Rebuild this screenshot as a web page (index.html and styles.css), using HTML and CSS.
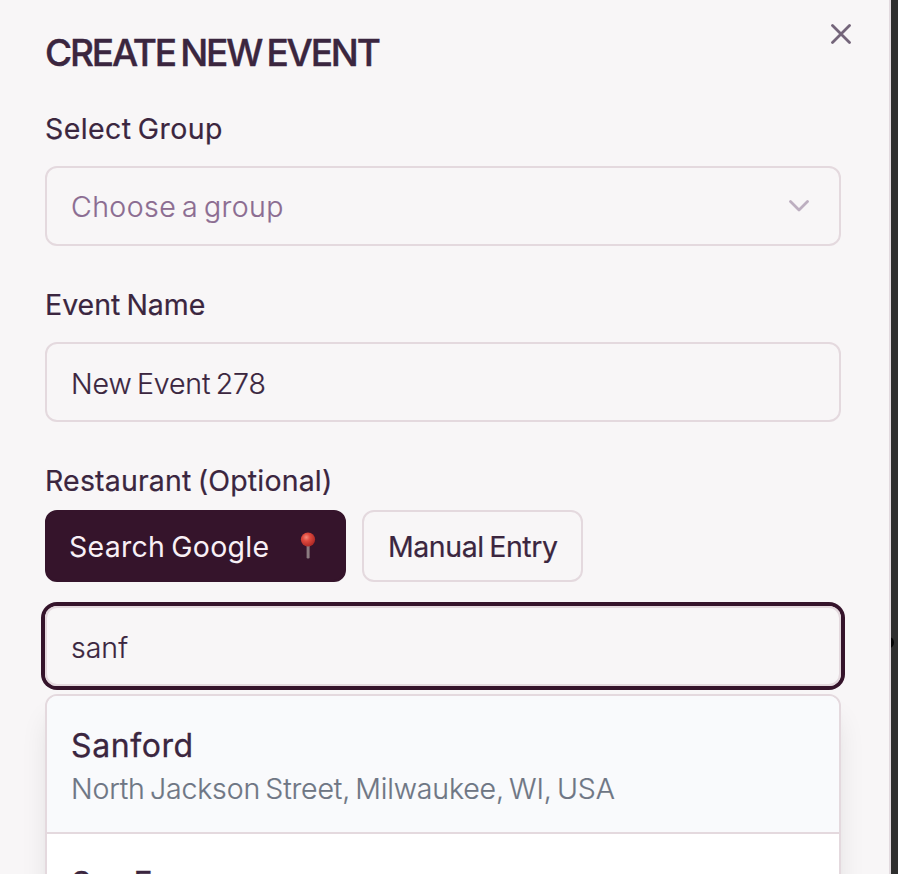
FILE: index.html
```html
<!DOCTYPE html>
<html lang="en">
<head>
<meta charset="utf-8">
<title>Create New Event</title>
<link rel="stylesheet" href="styles.css">
</head>
<body>
<main class="dialog">
  <h1 class="title"><span class="t-title">CREATE NEW EVENT</span></h1>
  <button class="close" aria-label="Close"><svg width="20" height="20" viewBox="0 0 20 20"><path d="M1.5 1.5 18.5 18.5M18.5 1.5 1.5 18.5"/></svg></button>

  <section class="group">
    <label class="label"><span class="t-select">Select Group</span></label>
    <div class="field select"><span class="placeholder t-choose">Choose a group</span>
      <svg class="chevron" width="20" height="12" viewBox="0 0 20 12"><path d="M1.5 1.5 10 10 18.500 1.500"/></svg>
    </div>
  </section>

  <section class="group">
    <label class="label"><span class="t-event">Event Name</span></label>
    <div class="field"><span class="t-new">New Event 278</span></div>
  </section>

  <section class="group restaurant">
    <label class="label"><span class="t-rest">Restaurant (Optional)</span></label>
    <div class="tabs">
      <button class="tab active"><span class="t-search">Search Google</span>
        <svg class="pin" width="16" height="28" viewBox="0 0 16 28">
          <defs><radialGradient id="ball" cx=".38" cy=".35" r=".65"><stop offset="0" stop-color="#f58a7c"/><stop offset=".4" stop-color="#df4a3e"/><stop offset="1" stop-color="#ad2926"/></radialGradient></defs>
          <rect x="6.600" y="13" width="3" height="13.500" rx="1.200" fill="#8b7b80"/>
          <circle cx="8" cy="7.500" r="7.100" fill="url(#ball)"/>
        </svg>
      </button>
      <button class="tab"><span class="t-manual">Manual Entry</span></button>
    </div>
    <div class="field focused"><span class="t-sanf">sanf</span></div>
    <div class="results">
      <div class="result highlighted">
        <div class="name"><span class="t-sanford">Sanford</span></div>
        <div class="address"><span class="t-north">North Jackson Street, Milwaukee, WI, USA</span></div>
      </div>
      <div class="result"><div class="name"><span class="t-next">San Fran</span></div></div>
    </div>
  </section>
</main>
<aside class="backdrop"><i class="dot"></i></aside>
</body>
</html>
```

FILE: styles.css
```css
* { box-sizing: border-box; }
body {
  margin: 0;
  height: 874px;
  display: flex;
  overflow: hidden;
  background: #2e2e2e;
  color: #3b263f;
  font-family: Inter, "Open Sans", sans-serif;
  font-size: 28.5px;
  line-height: 36px;
  white-space: nowrap;
}
button { font: inherit; color: inherit; background: none; border: 0; padding: 0; }
svg { display: block; fill: none; stroke-linecap: round; stroke-linejoin: round; }
.dialog {
  position: relative;
  width: 891px;
  height: 874px;
  overflow: hidden;
  padding: 29px 48px 0 45px;
  background: #f8f6f7;
  border-right: 2px solid #e2dadf;
}
.title { margin: 0; height: 82px; font-size: 37px; line-height: 48px; font-weight: 500; }
.close { position: absolute; left: 831px; top: 24px; }
.close svg { stroke: #74657a; stroke-width: 2.800; }
.group { height: 176px; }
.label { display: block; height: 55px; font-weight: 400; -webkit-text-stroke: .2px; }
.field {
  height: 80px;
  border: 2px solid #e4d9de;
  border-radius: 12px;
  padding: 3px 24px 0;
  display: flex;
  align-items: center;
  justify-content: space-between;
  font-weight: 300;
  -webkit-text-stroke: .2px;
}
.select { padding-top: 1px; }
.placeholder { color: #8b6c91; }
.chevron { margin-right: 6px; margin-top: -1px; }
.chevron path { stroke: #bdafc0; stroke-width: 2.800; }
.restaurant .label { height: 47px; }
.tabs { display: flex; gap: 16px; }
.tab { width: 221px; height: 72px; border: 2px solid #e4d9de; border-radius: 12px; padding: 2px 0 0 24px; display: flex; align-items: center; font-weight: 400; -webkit-text-stroke: .2px; }
.tab.active { width: 301px; background: #35142b; border-color: #35142b; color: #f8f0f6; justify-content: space-between; padding: 2px 28px 0 22px; -webkit-text-stroke: 0; }
.pin { margin-top: -2px; }
.focused { margin-top: 24px; box-shadow: 0 0 0 4px #35142b; }
.results { margin-top: 8px; height: 300px; border: 2px solid #e4d9de; border-radius: 12px; background: #fff; overflow: hidden; box-shadow: 0 20px 30px -6px rgb(0 0 0 / .12), 0 8px 12px -8px rgb(0 0 0 / .1); }
.result { height: 138px; padding: 29px 24px 0; border-bottom: 2px solid #e4d9de; }
.highlighted { background: #f9fafc; }
.name { font-size: 32px; line-height: 42px; font-weight: 400; -webkit-text-stroke: .3px; }
.address { margin-top: 4px; color: #6e7684; font-weight: 300; -webkit-text-stroke: .2px; }
.backdrop { position: relative; width: 7px; height: 874px; overflow: hidden; }
.dot { position: absolute; left: -7px; top: 637px; width: 10px; height: 11px; border-radius: 50%; background: #050505; }
.t-title { letter-spacing: -2.150px; word-spacing: -2.500px; -webkit-text-stroke: .4px; }
.t-select { letter-spacing: .4px; word-spacing: -2px; }
.t-choose { letter-spacing: .42px; word-spacing: -2.500px; }
.t-event { letter-spacing: 0; word-spacing: -2px; }
.t-new { letter-spacing: -.12px; word-spacing: -2.500px; }
.t-rest { letter-spacing: .17px; word-spacing: -2px; }
.t-search { letter-spacing: .27px; word-spacing: -2.200px; }
.t-manual { letter-spacing: -.45px; word-spacing: -2px; }
.t-sanford { letter-spacing: .6px; }
.t-north { letter-spacing: -.17px; word-spacing: -2.500px; }
.t-next { word-spacing: -4px; }
```
